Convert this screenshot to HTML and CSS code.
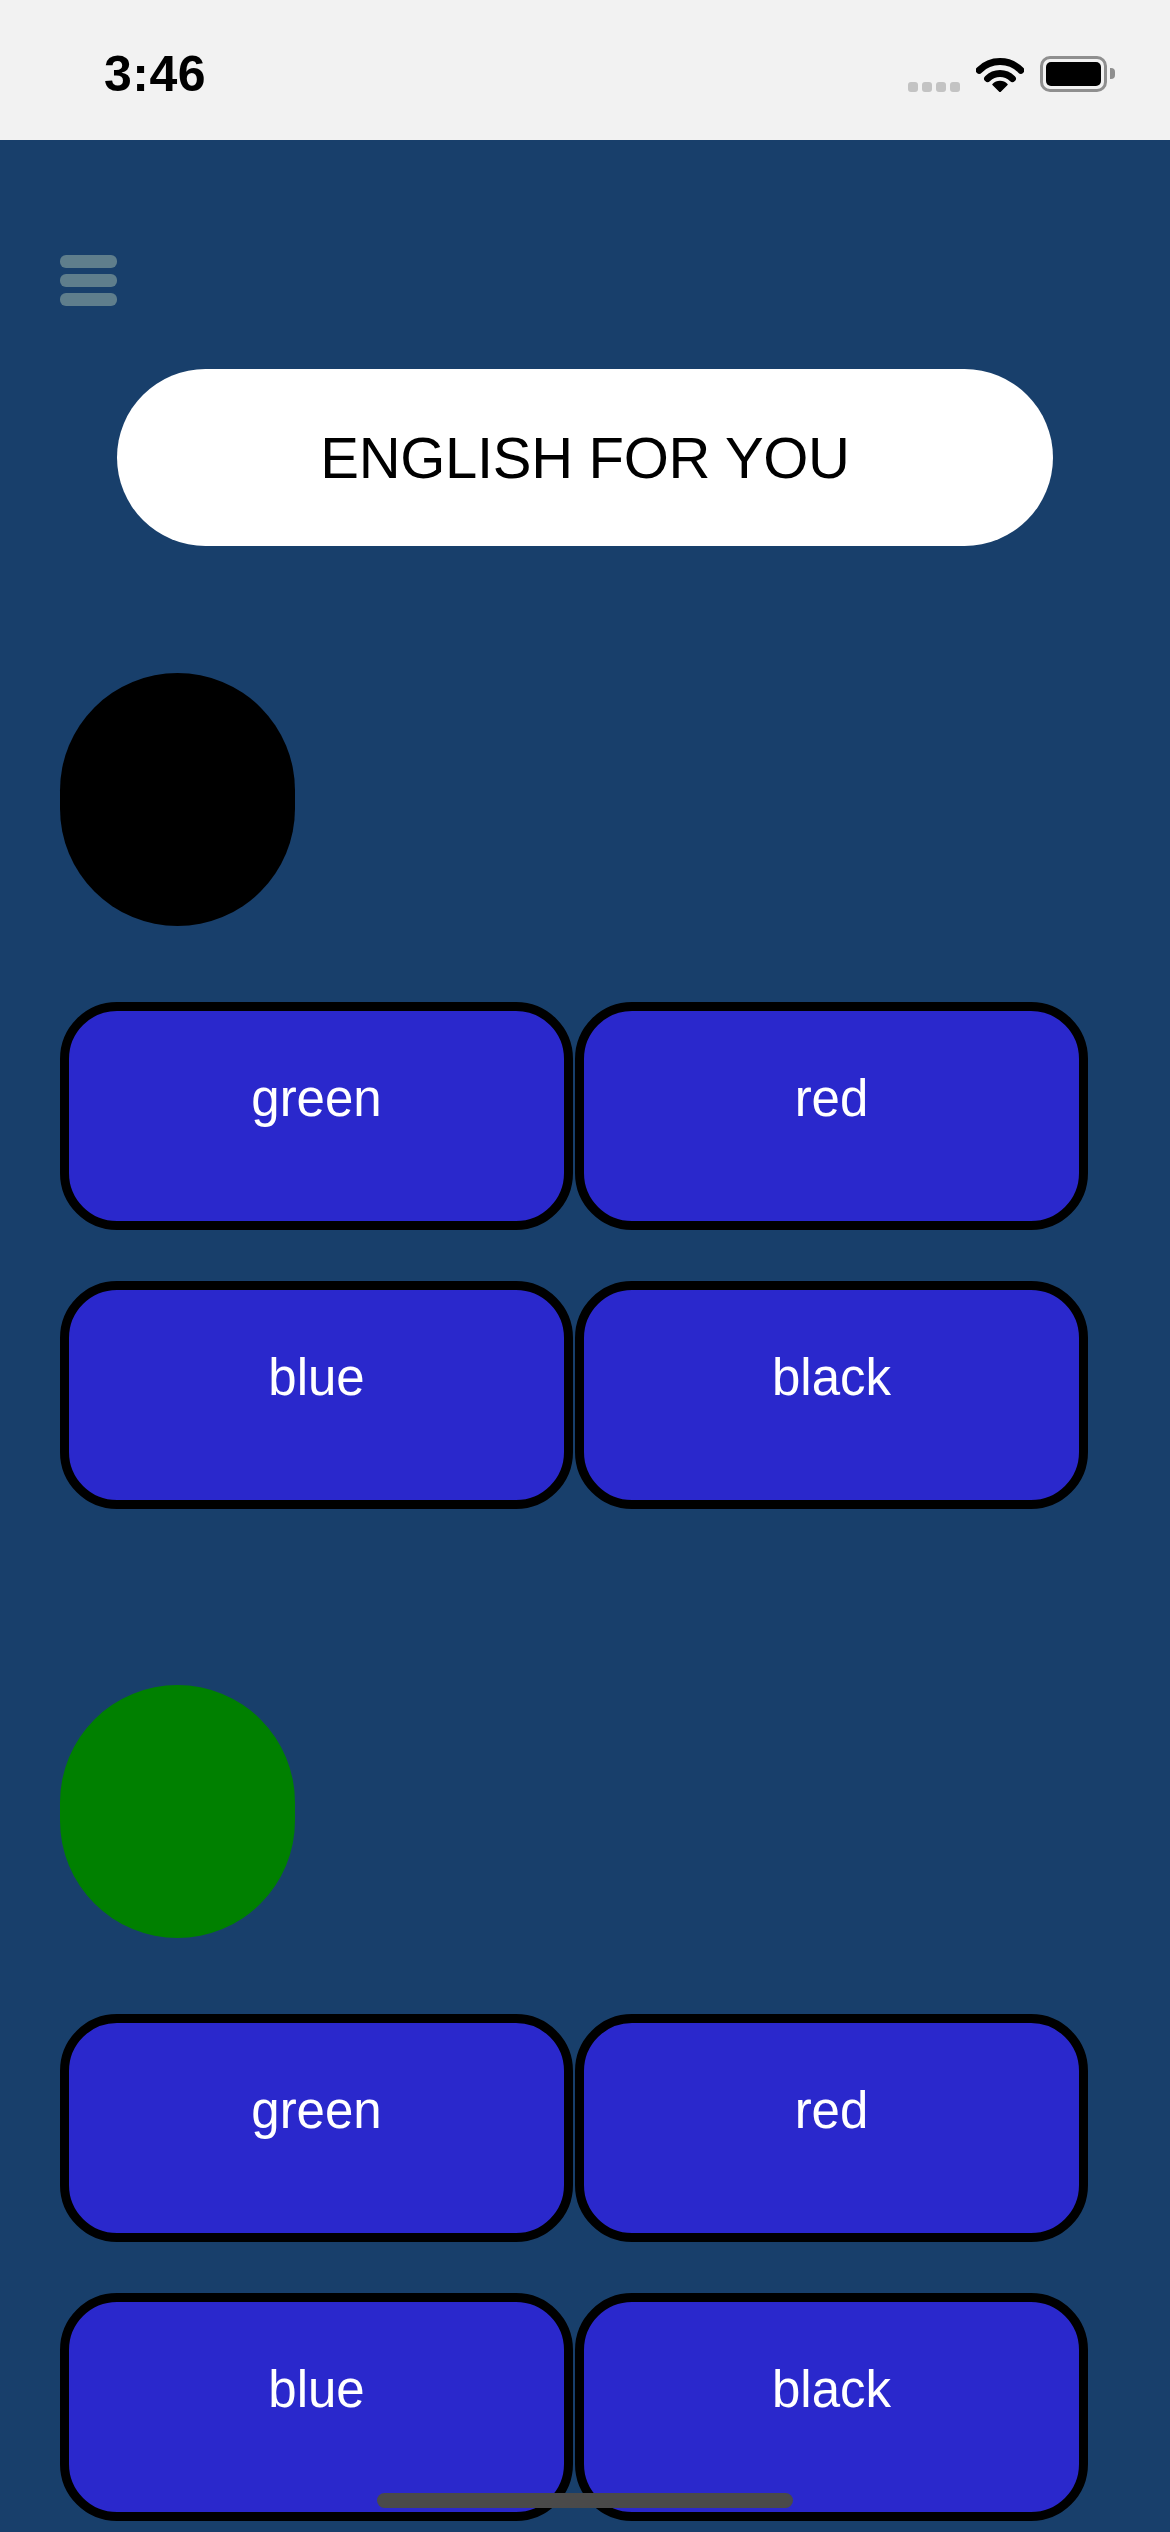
FILE: index.html
```html
<!DOCTYPE html>
<html lang="en">
<head>
<meta charset="utf-8">
<title>English for you</title>
<link rel="stylesheet" href="styles.css">
</head>
<body>
<div class="screen">
  <header class="status">
    <div class="time">3:46</div>
    <div class="status-icons">
      <div class="signal"><span></span><span></span><span></span><span></span></div>
      <svg class="wifi" width="48" height="36" viewBox="0 0 48 36">
        <path d="M3.2 14.2 A29.5 29.5 0 0 1 44.8 14.2" fill="none" stroke="#000" stroke-width="7" stroke-linecap="round"/>
        <path d="M11.6 22.6 A17.5 17.5 0 0 1 36.4 22.6" fill="none" stroke="#000" stroke-width="7" stroke-linecap="round"/>
        <path d="M24 35.5 L17 28.5 A9.9 9.9 0 0 1 31 28.5 Z" fill="#000" stroke="#000" stroke-width="1.5" stroke-linejoin="round"/>
      </svg>
      <div class="battery"><div class="battery-body"><div class="battery-fill"></div></div><div class="battery-nub"></div></div>
    </div>
  </header>

  <main class="content">
    <button class="menu" aria-label="menu"><span></span><span></span><span></span></button>

    <div class="title-pill">ENGLISH FOR YOU</div>

    <section class="quiz">
      <div class="swatch swatch-black"></div>
      <div class="answers">
        <button class="answer"><span class="answer-label">green</span></button>
        <button class="answer"><span class="answer-label">red</span></button>
        <button class="answer"><span class="answer-label">blue</span></button>
        <button class="answer"><span class="answer-label">black</span></button>
      </div>
    </section>

    <section class="quiz">
      <div class="swatch swatch-green"></div>
      <div class="answers">
        <button class="answer"><span class="answer-label">green</span></button>
        <button class="answer"><span class="answer-label">red</span></button>
        <button class="answer"><span class="answer-label">blue</span></button>
        <button class="answer"><span class="answer-label">black</span></button>
      </div>
    </section>
  </main>

  <div class="home-indicator"></div>
</div>
</body>
</html>
```

FILE: styles.css
```css
html, body {
  margin: 0;
  padding: 0;
}

body {
  width: 1170px;
  height: 2532px;
  overflow: hidden;
  background: #183f6b;
  font-family: "Liberation Sans", Arial, sans-serif;
}

.screen {
  position: relative;
  width: 1170px;
  height: 2532px;
  overflow: hidden;
}

/* status bar */
.status {
  box-sizing: border-box;
  height: 140px;
  background: #f2f2f2;
  display: flex;
  align-items: center;
  justify-content: space-between;
  padding: 7px 55px 0 104px;
}

.time {
  font-size: 50px;
  line-height: 50px;
  font-weight: 700;
  color: #000;
  letter-spacing: 0.5px;
}

.status-icons {
  display: flex;
  align-items: center;
}

.signal {
  display: flex;
  gap: 4px;
  margin-top: 26px;
  margin-right: 16px;
}

.signal span {
  width: 10px;
  height: 10px;
  border-radius: 3px;
  background: #c3c3c3;
}

.wifi {
  display: block;
  margin-right: 16px;
}

.battery {
  display: flex;
  align-items: center;
}

.battery-body {
  box-sizing: border-box;
  width: 67px;
  height: 36px;
  border: 3px solid #8f8f8f;
  border-radius: 10px;
  padding: 3px;
}

.battery-fill {
  width: 100%;
  height: 100%;
  background: #000;
  border-radius: 5px;
}

.battery-nub {
  width: 5px;
  height: 11px;
  margin-left: 3px;
  background: #8f8f8f;
  border-radius: 0 4px 4px 0;
}

/* content */
.content {
  padding: 0 60px;
}

.menu {
  display: flex;
  flex-direction: column;
  gap: 6px;
  margin: 115px 0 0 0;
  padding: 0;
  border: 0;
  background: none;
  width: 57px;
}

.menu span {
  display: block;
  width: 57px;
  height: 13px;
  border-radius: 6px;
  background: #5f7e8c;
}

.title-pill {
  box-sizing: border-box;
  width: 936px;
  height: 177px;
  margin: 63px auto 0;
  border-radius: 89px;
  background: #fff;
  color: #000;
  display: flex;
  align-items: center;
  justify-content: center;
  font-size: 58px;
  letter-spacing: -0.3px;
}

.quiz {
  margin-top: 127px;
}

.quiz + .quiz {
  margin-top: 176px;
}

.swatch {
  width: 235px;
  height: 253px;
  border-radius: 118px;
}

.swatch-black {
  background: #000;
}

.swatch-green {
  background: #008000;
}

.answers {
  margin-top: 76px;
  display: grid;
  grid-template-columns: 513px 513px;
  column-gap: 2px;
  row-gap: 51px;
}

.answer {
  box-sizing: border-box;
  height: 228px;
  margin: 0;
  border: 9px solid #000;
  border-radius: 57px;
  background: #2a28cc;
  color: #fff;
  font-family: "Liberation Sans", Arial, sans-serif;
  font-size: 51px;
  padding: 58px 0 0 0;
  display: flex;
  align-items: flex-start;
  justify-content: center;
}

.answer-label {
  display: block;
  line-height: 60px;
}

.home-indicator {
  position: absolute;
  left: 377px;
  bottom: 24px;
  width: 416px;
  height: 15px;
  border-radius: 8px;
  background: #4a4a4a;
}
```
